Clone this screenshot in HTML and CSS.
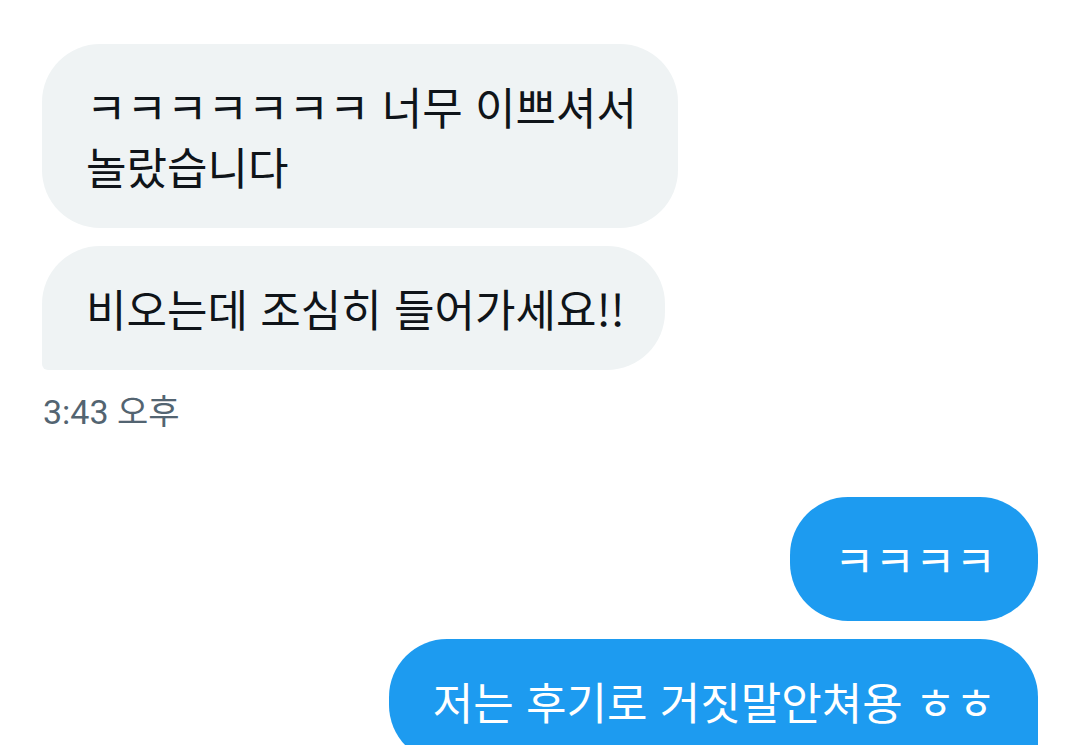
FILE: index.html
```html
<!DOCTYPE html>
<html lang="ko">
<head>
<meta charset="utf-8">
<title>DM</title>
<link rel="stylesheet" href="styles.css">
</head>
<body>
<main class="chat">
  <section class="group group-in">
    <div class="bubble bubble-in">ㅋㅋㅋㅋㅋㅋㅋ 너무 이쁘셔서 놀랐습니다</div>
    <div class="bubble bubble-in bubble-in-last">비오는데 조심히 들어가세요!!</div>
  </section>
  <div class="timestamp">3:43 오후</div>
  <section class="group group-out">
    <div class="bubble bubble-out">ㅋㅋㅋㅋ</div>
    <div class="bubble bubble-out bubble-out-last">저는 후기로 거짓말안쳐용 ㅎㅎ</div>
  </section>
</main>
</body>
</html>
```

FILE: styles.css
```css
* { box-sizing: border-box; }

html, body {
  margin: 0;
  padding: 0;
  background: #ffffff;
  overflow: hidden;
}

body {
  font-family: "Roboto", "Noto Sans CJK KR", "Noto Sans", sans-serif;
  color: #0f1419;
}

.chat {
  display: flex;
  flex-direction: column;
  padding: 44px 39px 0 42px;
}

.group {
  display: flex;
  flex-direction: column;
  gap: 18px;
}

.group-in { align-items: flex-start; }
.group-out { align-items: flex-end; margin-top: 64px; }

.bubble {
  font-family: "Noto Sans CJK KR", "Noto Sans", sans-serif;
  font-size: 44px;
  line-height: 60px;
  padding: 32px 40px 32px 44px;
  border-radius: 58px;
  max-width: 636px;
}

.bubble-in {
  background: #eff3f4;
  color: #0f1419;
}

.bubble-in-last { border-bottom-left-radius: 6px; }

.bubble-out {
  background: #1d9bf0;
  color: #ffffff;
  padding-right: 42px;
}

.bubble-out-last { border-bottom-right-radius: 6px; max-width: none; }

.timestamp {
  margin-top: 21px;
  font-family: "Roboto", "Noto Sans CJK KR", sans-serif;
  font-size: 34px;
  line-height: 42px;
  color: #536471;
  padding-left: 1px;
}
```
